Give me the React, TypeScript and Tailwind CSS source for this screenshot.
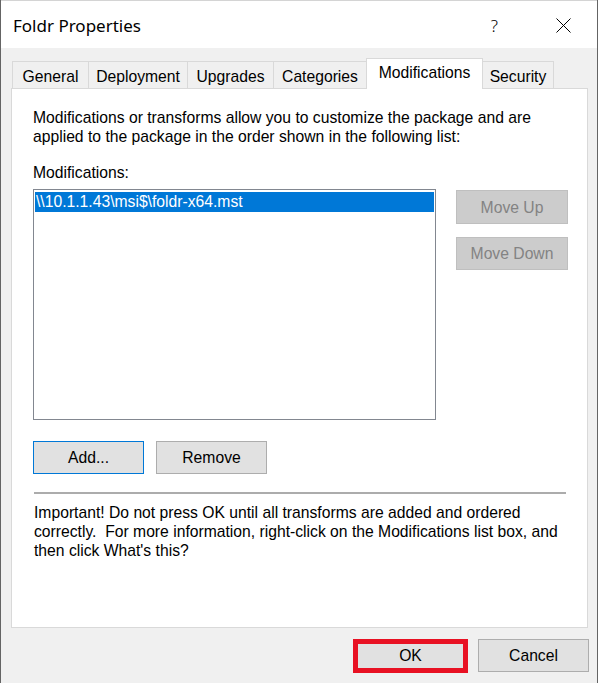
import { useState } from 'react'

const tabs = ['General', 'Deployment', 'Upgrades', 'Categories', 'Modifications', 'Security']
const tabWidths: Record<string, string> = {
  General: 'w-[77px]',
  Deployment: 'w-[100px]',
  Upgrades: 'w-[87px]',
  Categories: 'w-[94px]',
  Modifications: 'w-[117px]',
  Security: 'w-[72px]',
}

function TabStrip({ active }: { active: string }) {
  return (
    <div className="ml-[11px] mt-[10px] flex h-[30px] items-end">
      {tabs.map((t, i) => {
        const selected = t === active
        return (
          <div
            key={t}
            className={`${tabWidths[t]} ${i > 0 ? '-ml-px' : ''} flex items-center justify-center border border-b-0 border-[#d9d9d9] ${
              selected ? 'relative z-10 -mb-px h-[31px] bg-white pb-[3px]' : 'h-[27px] bg-[#f0f0f0] pt-[4px]'
            }`}
          >
            {t}
          </div>
        )
      })}
    </div>
  )
}

function WinButton({ label, className, disabled }: { label: string; className: string; disabled?: boolean }) {
  return (
    <div
      className={`flex items-center justify-center border ${
        disabled ? 'border-[#bfbfbf] bg-[#cccccc] text-[#838383]' : 'border-[#adadad] bg-[#e1e1e1]'
      } ${className}`}
    >
      {label}
    </div>
  )
}

export default function App() {
  const [tab] = useState('Modifications')

  return (
    <div className="h-[685px] w-[600px] bg-white font-['Liberation_Sans',Arial,sans-serif] text-[15.7px] text-black">
      <div className="flex h-[683px] w-[598px] flex-col border-x border-[#646464] bg-[#f0f0f0]">
        <div className="flex h-[48px] shrink-0 items-center border-t border-[#d4d4d4] bg-white pt-[3px]">
          <span className="pl-[12px] font-['Noto_Sans',sans-serif] text-[17px]">Foldr Properties</span>
          <span className="ml-auto mr-[58px] font-['Noto_Sans',sans-serif] text-[17px] font-light">?</span>
          <svg className="mr-[26px] mb-[2px]" width="15" height="15" viewBox="0 0 15 15">
            <path d="M0.5 0.5 L14.5 14.5 M14.5 0.5 L0.5 14.5" stroke="#000" strokeWidth="1" />
          </svg>
        </div>

        <TabStrip active={tab} />

        <div className="ml-[10px] h-[540px] w-[577px] border border-[#d9d9d9] bg-white pl-[21px] pt-[19px] leading-[19px]">
          <p>
            Modifications or transforms allow you to customize the package and are
            <br />
            applied to the package in the order shown in the following list:
          </p>
          <p className="mt-[17px]">Modifications:</p>

          <div className="mt-[7px] flex">
            <div className="h-[231px] w-[403px] border border-[#828790] px-px pt-[2px]">
              <div className="h-[20px] bg-[#0078d7] pl-px leading-[20px] text-white">{'\\\\10.1.1.43\\msi$\\foldr-x64.mst'}</div>
            </div>
            <div className="ml-[20px] flex flex-col">
              <WinButton label="Move Up" disabled className="mt-px h-[34px] w-[112px]" />
              <WinButton label="Move Down" disabled className="mt-[13px] h-[33px] w-[112px]" />
            </div>
          </div>

          <div className="mt-[21px] flex">
            <div className="flex h-[33px] w-[111px] items-center justify-center border border-[#0078d7] bg-[#e1e1e1]">Add...</div>
            <WinButton label="Remove" className="ml-[12px] h-[33px] w-[111px]" />
          </div>

          <div className="ml-px mt-[18px] h-[2px] w-[532px] bg-[#acacac]" />

          <p className="ml-px mt-[9px] whitespace-nowrap">
            Important! Do not press OK until all transforms are added and ordered
            <br />
            {'correctly.\u00a0 For more information, right-click on the Modifications list box, and'}
            <br />
            then click What's this?
          </p>
        </div>

        <div className="mt-[11px] flex justify-end pr-[8px]">
          <div className="flex h-[34px] w-[115px] items-center justify-center border-[5px] border-[#e81123] bg-[#e1e1e1]">OK</div>
          <WinButton label="Cancel" className="ml-[10px] h-[33px] w-[111px]" />
        </div>
      </div>
    </div>
  )
}
